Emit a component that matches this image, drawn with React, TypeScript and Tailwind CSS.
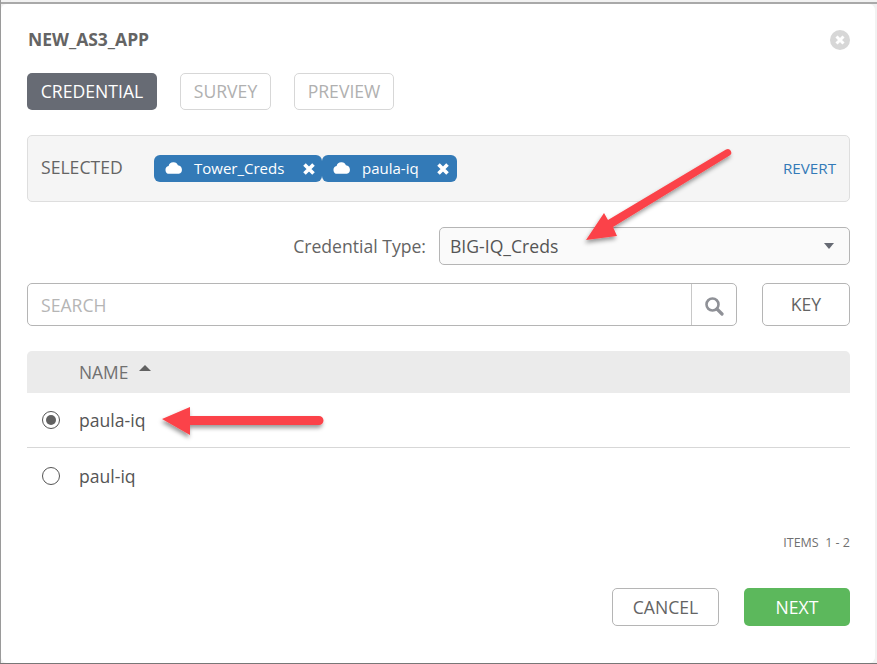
export default function App() {
  const font = { fontFamily: '"Open Sans", sans-serif' };
  return (
    <div style={font} className="relative w-[877px] h-[664px] overflow-hidden bg-[#f2f2f2] pt-[4px] pl-[1px] text-[#616161]">
      <div className="absolute left-0 right-0 top-[2px] h-[2px] bg-[#a9a9a9]" />
      <div className="absolute left-0 top-0 bottom-0 w-[1px] bg-[#9a9a9a]" />
      <div className="absolute left-0 right-0 bottom-0 h-[1px] bg-[#777777]" />
      <div className="relative w-[874px] h-[659px] bg-white rounded-[6px] pl-[26px] pr-[25px]">
        <div className="flex justify-between items-center h-[34px] pt-[17px] box-content w-[823px]">
          <div className="text-[17.5px] font-bold text-[#646464] leading-[34px] ml-[1px] mt-[1px]">NEW_AS3_APP</div>
          <svg width="20" height="20" viewBox="0 0 20 20" className="mt-[3px]">
            <circle cx="10" cy="10" r="10" fill="#d7d7d7" />
            <path d="M6.5 6.5L13.5 13.5M13.5 6.5L6.5 13.5" stroke="#fff" strokeWidth="3" />
          </svg>
        </div>
        <div className="flex gap-[23px] mt-[18px] text-[17.6px] leading-none">
          <div className="w-[130px] h-[37px] rounded-[5px] bg-[#676b74] text-white flex items-center justify-center">CREDENTIAL</div>
          <div className="w-[91px] h-[37px] rounded-[5px] border border-[#d7d7d7] text-[#b0b0b0] flex items-center justify-center">SURVEY</div>
          <div className="w-[100px] h-[37px] rounded-[5px] border border-[#d7d7d7] text-[#b0b0b0] flex items-center justify-center">PREVIEW</div>
        </div>
        <div className="flex items-center mt-[25px] h-[67px] w-[823px] bg-[#f5f5f5] border border-[#dedede] rounded-[5px] pl-[13px] pr-[13px]">
          <div className="text-[17.6px] w-[113px] mt-[-3px] text-[#646464]">SELECTED</div>
          <div className="flex text-[15px] text-white">
            <div className="flex items-center w-[168px] h-[27px] rounded-[6px] bg-[#337ab7] pl-[11px]">
              <Cloud />
              <span className="ml-[11px] w-[109px]">Tower_Creds</span>
              <X />
            </div>
            <div className="flex items-center w-[135px] h-[27px] rounded-[6px] bg-[#337ab7] pl-[11px]">
              <Cloud />
              <span className="ml-[11px] w-[75px]">paula-iq</span>
              <X />
            </div>
          </div>
          <div className="ml-auto text-[15.2px] text-[#337ab7]">REVERT</div>
        </div>
        <div className="flex items-center justify-end mt-[25px] h-[38px] w-[823px]">
          <div className="text-[17.6px] text-[#646464] mr-[13px]">Credential Type:</div>
          <div className="w-[411px] h-[38px] rounded-[5px] border border-[#b5b5b5] bg-[#fafafa] flex items-center justify-between pl-[10px] pr-[15px] text-[17.6px] text-[#555555]">
            <span>BIG-IQ_Creds</span>
            <div className="w-0 h-0 border-l-[5px] border-r-[5px] border-t-[6px] border-l-transparent border-r-transparent border-t-[#666a73]" />
          </div>
        </div>
        <div className="flex justify-between mt-[18px] w-[823px]">
          <div className="flex w-[710px] h-[43px] rounded-[5px] border border-[#b5b5b5]">
            <div className="flex-1 flex items-center pl-[13px] pt-[1px] text-[17.6px] text-[#b5b5b5]">SEARCH</div>
            <div className="w-[45px] border-l border-[#c8c8c8] flex items-center justify-center pt-[2px]">
              <svg width="20" height="20" viewBox="0 0 20 20" fill="none" stroke="#8f9197">
                <circle cx="8.5" cy="8.5" r="6" strokeWidth="2.6" />
                <path d="M13 13l5 5" strokeWidth="3.2" strokeLinecap="round" />
              </svg>
            </div>
          </div>
          <div className="w-[88px] h-[43px] rounded-[5px] border border-[#b5b5b5] flex items-center justify-center text-[17.6px] text-[#646464]">KEY</div>
        </div>
        <div className="mt-[25px] w-[823px]">
          <div className="h-[42px] bg-[#ebebeb] rounded-t-[5px] flex items-center pl-[52px] text-[17.4px] text-[#707070]">
            <span>NAME</span>
            <div className="ml-[11px] mt-[-9px] w-0 h-0 border-l-[6px] border-r-[6px] border-b-[6px] border-l-transparent border-r-transparent border-b-[#616161]" />
          </div>
          <div className="h-[55px] border-b border-[#d7d7d7] flex items-center text-[17.6px] text-[#555555]">
            <div className="ml-[15px] w-[18px] h-[18px] rounded-full border border-[#555555] flex items-center justify-center">
              <div className="w-[10px] h-[10px] rounded-full bg-[#616161]" />
            </div>
            <span className="ml-[19px]">paula-iq</span>
          </div>
          <div className="h-[56px] flex items-center text-[17.6px] text-[#555555]">
            <div className="ml-[15px] w-[18px] h-[18px] rounded-full border border-[#555555]" />
            <span className="ml-[19px]">paul-iq</span>
          </div>
        </div>
        <div className="mt-[31px] w-[823px] text-right text-[12.5px] leading-[16px] text-[#707070] whitespace-pre">ITEMS  1 - 2</div>
        <div className="flex justify-end gap-[25px] mt-[37px] w-[823px] text-[17.6px]">
          <div className="w-[107px] h-[38px] rounded-[5px] border border-[#b5b5b5] flex items-center justify-center text-[#646464]">CANCEL</div>
          <div className="w-[106px] h-[38px] rounded-[5px] bg-[#5cb85c] flex items-center justify-center text-white">NEXT</div>
        </div>
      </div>
      <svg className="absolute left-0 top-0 pointer-events-none" width="877" height="664">
        <defs>
          <filter id="s" x="-20%" y="-20%" width="150%" height="150%">
            <feDropShadow dx="-1" dy="3" stdDeviation="2" floodColor="#000" floodOpacity="0.4" />
          </filter>
        </defs>
        <g filter="url(#s)" fill="#fb4348">
          <path d="M726 149.5a3.5 3.5 0 0 1 3.6 6L613 227l4 9-31 4 18-27 4 7z" />
          <path d="M162 419l28-12v9h129a4 4 0 0 1 0 9H190v10z" />
        </g>
      </svg>
    </div>
  );
}

function Cloud() {
  return (
    <svg width="18" height="13" viewBox="0 0 17 12" fill="#fff" className="mt-[-2px]">
      <path d="M4 12a3.8 3.8 0 0 1-.6-7.5A4.6 4.6 0 0 1 8.2 1a4.4 4.4 0 0 1 4 2.8A4.2 4.2 0 0 1 13 12z" />
    </svg>
  );
}

function X() {
  return (
    <svg width="12" height="12" viewBox="0 0 12 12" stroke="#fff" strokeWidth="3.6">
      <path d="M1.5 1.5l9 9M10.5 1.5l-9 9" />
    </svg>
  );
}
